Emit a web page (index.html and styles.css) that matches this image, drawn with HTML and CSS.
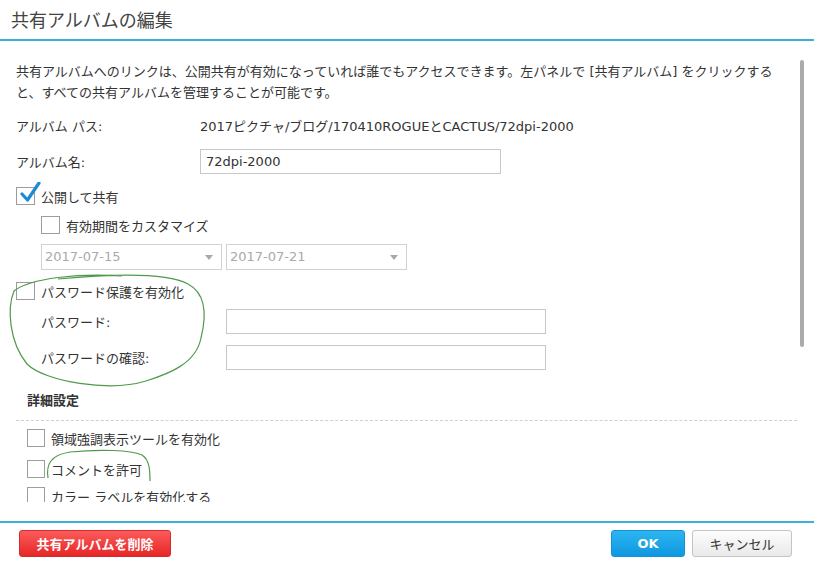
FILE: index.html
```html
<!DOCTYPE html>
<html lang="ja">
<head>
    <meta charset="UTF-8">
    <title>共有アルバムの編集</title>
    <link rel="stylesheet" href="styles.css">
</head>
<body>
    <div class="dialog">
        <header class="dialog-header">
            <h1>共有アルバムの編集</h1>
        </header>

        <div class="dialog-body">
            <div class="scroll-thumb"></div>

            <div class="scroll-view">
                <p class="desc">共有アルバムへのリンクは、公開共有が有効になっていれば誰でもアクセスできます。左パネルで [共有アルバム] をクリックすると、すべての共有アルバムを管理することが可能です。</p>

                <div class="row">
                    <span class="label">アルバム パス:</span>
                    <span class="value">2017ピクチャ/ブログ/170410ROGUEとCACTUS/72dpi-2000</span>
                </div>

                <div class="row gap-lg">
                    <span class="label">アルバム名:</span>
                    <input type="text" class="text-input name-input" value="72dpi-2000">
                </div>

                <div class="row">
                    <label class="check">
                        <span class="box checked">
                            <svg width="24" height="24" viewBox="0 0 24 24"><path d="M4 12 L9.5 18 L21 1" fill="none" stroke="#1d8ad6" stroke-width="3.2" stroke-linecap="round" stroke-linejoin="round"/></svg>
                        </span>
                        公開して共有
                    </label>
                </div>

                <div class="row gap-sm indent">
                    <label class="check"><span class="box"></span>有効期間をカスタマイズ</label>
                </div>

                <div class="row gap-md indent">
                    <div class="combo">2017-07-15<span class="arrow"></span></div>
                    <div class="combo">2017-07-21<span class="arrow"></span></div>
                </div>

                <div class="row gap-8">
                    <label class="check"><span class="box"></span>パスワード保護を有効化</label>
                </div>

                <div class="row gap-4 indent">
                    <span class="label pw-label">パスワード:</span>
                    <input type="password" class="text-input pw-input">
                </div>

                <div class="row gap-lg indent">
                    <span class="label pw-label">パスワードの確認:</span>
                    <input type="password" class="text-input pw-input">
                </div>

                <h2 class="section-title">詳細設定</h2>

                <div class="advanced">
                    <div class="row gap-4">
                        <label class="check"><span class="box"></span>領域強調表示ツールを有効化</label>
                    </div>
                    <div class="row gap-5">
                        <label class="check"><span class="box"></span>コメントを許可</label>
                    </div>
                    <div class="row gap-1">
                        <label class="check"><span class="box"></span>カラー ラベルを有効化する</label>
                    </div>
                </div>
            </div>
        </div>

        <footer class="dialog-footer">
            <button class="btn btn-danger">共有アルバムを削除</button>
            <button class="btn btn-primary">OK</button>
            <button class="btn btn-default">キャンセル</button>
        </footer>

        <!-- hand-drawn marks on the screenshot -->
        <svg class="marks" width="814" height="564" viewBox="0 0 814 564">
            <path d="M122 276 C 80 273, 30 278, 14 291 C 7 308, 9 342, 27 364 C 45 382, 110 392, 146 381 C 168 374, 196 364, 201 338 C 207 314, 205 293, 188 284 C 166 272, 112 274, 58 279" fill="none" stroke="#4f9a4a" stroke-width="1.2"/>
            <path d="M48 478 C 46 465, 50 455, 70 452 C 100 449, 130 450, 142 455 C 150 460, 150 472, 150 481" fill="none" stroke="#4f9a4a" stroke-width="1.2"/>
        </svg>
    </div>
</body>
</html>
```

FILE: styles.css
```css
body {
    margin: 0;
    background: #fff;
    font-family: "DejaVu Sans", "Noto Sans CJK JP", sans-serif;
    font-size: 13px;
    color: #333;
}

.dialog {
    position: relative;
    width: 814px;
    height: 564px;
    overflow: hidden;
}

.dialog-header {
    height: 39px;
    border-bottom: 2px solid #3cb0d9;
}

.dialog-header h1 {
    margin: 0;
    padding-left: 11px;
    line-height: 39px;
    font-family: "Noto Sans CJK JP", sans-serif;
    font-size: 18px;
    font-weight: normal;
    color: #444;
}

.dialog-body {
    position: relative;
    height: 480px;
    padding: 20px 17px 0 16px;
    box-sizing: border-box;
}

.scroll-view {
    height: 441px;
    overflow: hidden;
}

.scroll-thumb {
    position: absolute;
    top: 19px;
    right: 10px;
    width: 4px;
    height: 287px;
    background: #ababab;
    border-radius: 2px;
}

.desc {
    width: 766px;
    margin: 0;
    line-height: 21px;
}

.row {
    display: flex;
    align-items: center;
    height: 26px;
    margin-top: 9px;
}

.row.gap-1 { margin-top: 1px; }
.row.gap-sm { margin-top: 3px; }
.row.gap-4 { margin-top: 4px; }
.row.gap-5 { margin-top: 5px; }
.row.gap-md { margin-top: 6px; }
.row.gap-8 { margin-top: 8px; }
.row.gap-lg { margin-top: 10px; }

.indent {
    padding-left: 25px;
}

.label {
    width: 184px;
    flex-shrink: 0;
}

.pw-label {
    width: 185px;
}

.text-input {
    height: 25px;
    box-sizing: border-box;
    border: 1px solid #c8c8c8;
    padding: 0 5px;
    font-family: inherit;
    font-size: 13px;
    color: #333;
    outline: none;
}

.name-input {
    width: 301px;
}

.pw-input {
    width: 320px;
}

.check {
    display: flex;
    align-items: center;
    gap: 6px;
}

.box {
    position: relative;
    width: 19px;
    height: 18px;
    box-sizing: border-box;
    border: 1px solid #9d9d9d;
    background: #fff;
}

.box svg {
    position: absolute;
    left: 1px;
    top: -6px;
}

.combo {
    position: relative;
    width: 181px;
    height: 26px;
    box-sizing: border-box;
    border: 1px solid #d2d2d2;
    margin-right: 4px;
    padding-left: 3px;
    line-height: 24px;
    color: #aaa;
}

.arrow {
    position: absolute;
    right: 8px;
    top: 10px;
    border-left: 4px solid transparent;
    border-right: 4px solid transparent;
    border-top: 5px solid #a8a8a8;
}

.section-title {
    margin: 18px 0 0 11px;
    height: 26px;
    line-height: 26px;
    font-size: 13px;
    font-weight: bold;
}

.advanced {
    margin-top: 6px;
    padding-left: 11px;
    border-top: 1px dashed #cfcfcf;
    width: 770px;
}

.advanced .box {
    width: 18px;
}

.dialog-footer {
    display: flex;
    gap: 7px;
    padding: 7px 22px 0 19px;
    border-top: 2px solid #3cb0d9;
}

.btn {
    height: 27px;
    border-radius: 3px;
    font-family: "DejaVu Sans", "Noto Sans CJK JP", sans-serif;
    font-size: 13px;
    cursor: pointer;
}

.btn-danger {
    width: 152px;
    margin-right: auto;
    border: 1px solid #d42a2a;
    background: linear-gradient(#fb5b5b, #e62626);
    color: #fff;
    font-weight: bold;
}

.btn-primary {
    width: 74px;
    border: 1px solid #1592d6;
    background: linear-gradient(#2bb6f2, #0f97e0);
    color: #fff;
    font-weight: bold;
}

.btn-default {
    width: 100px;
    border: 1px solid #c4c4c4;
    background: linear-gradient(#fdfdfd, #e9e9e9);
    color: #333;
}

.marks {
    position: absolute;
    left: 0;
    top: 0;
    pointer-events: none;
}
```
